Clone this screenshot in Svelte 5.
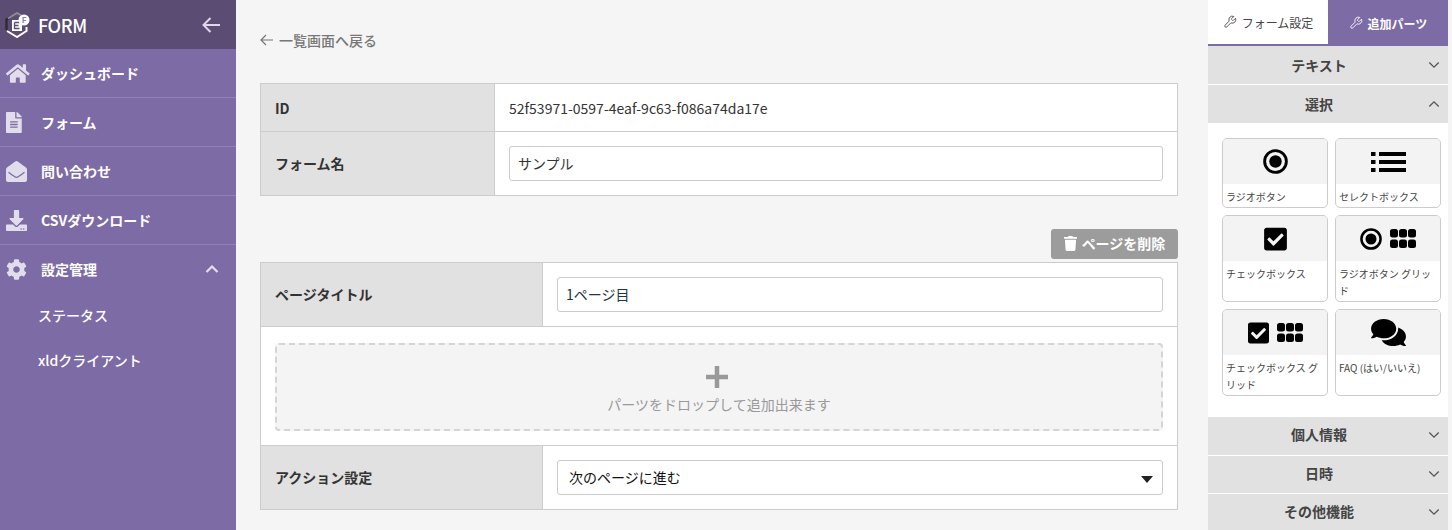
<script>
  const menu = [
    { label: 'ダッシュボード', icon: 'home' },
    { label: 'フォーム', icon: 'file' },
    { label: '問い合わせ', icon: 'mail' },
    { label: 'CSVダウンロード', icon: 'download' }
  ];

  // six rounded cells, 3 x 2
  const cell = (x, y) =>
    `M${x + 2.5} ${y}h3a2.5 2.5 0 0 1 2.5 2.5v3.500a2.500 2.500 0 0 1-2.500 2.500h-3a2.500 2.500 0 0 1-2.500-2.500v-3.500a2.500 2.500 0 0 1 2.500-2.500z`;
  const dotsPath = [0, 9, 18].map((x) => cell(x, 0) + cell(x, 10.5)).join('');

  const icons = {
    home: { box: '0 0 576 512', d: 'M280.37 148.26L96 300.11V464a16 16 0 0 0 16 16l112.06-.29a16 16 0 0 0 15.92-16V368a16 16 0 0 1 16-16h64a16 16 0 0 1 16 16v95.64a16 16 0 0 0 16 16.05L464 480a16 16 0 0 0 16-16V300L295.67 148.26a12.19 12.19 0 0 0-15.3 0zM571.6 251.47L488 182.56V44.05a12 12 0 0 0-12-12h-56a12 12 0 0 0-12 12v72.61L318.47 43a48 48 0 0 0-61 0L4.34 251.47a12 12 0 0 0-1.6 16.9l25.5 31A12 12 0 0 0 45.15 301l235.22-193.74a12.19 12.19 0 0 1 15.3 0L530.9 301a12 12 0 0 0 16.9-1.6l25.5-31a12 12 0 0 0-1.7-16.93z' },
    file: { box: '0 0 384 512', d: 'M224 136V0H24C10.7 0 0 10.7 0 24v464c0 13.3 10.7 24 24 24h336c13.3 0 24-10.7 24-24V160H248c-13.2 0-24-10.8-24-24zm64 236c0 6.6-5.4 12-12 12H108c-6.6 0-12-5.4-12-12v-8c0-6.6 5.4-12 12-12h168c6.6 0 12 5.4 12 12v8zm0-64c0 6.6-5.4 12-12 12H108c-6.6 0-12-5.4-12-12v-8c0-6.6 5.4-12 12-12h168c6.6 0 12 5.4 12 12v8zm0-72v8c0 6.6-5.4 12-12 12H108c-6.6 0-12-5.4-12-12v-8c0-6.6 5.4-12 12-12h168c6.6 0 12 5.4 12 12zm96-114.1v6.1H256V0h6.1c6.4 0 12.5 2.5 17 7l97.9 98c4.5 4.5 7 10.6 7 16.9z' },
    mail: { box: '0 0 512 512', d: 'M512 464c0 26.51-21.49 48-48 48H48c-26.51 0-48-21.49-48-48V200.724a48 48 0 0 1 18.387-37.776c24.913-19.529 45.501-35.365 164.2-121.511C199.412 29.17 232.797-.347 256 .003c23.198-.354 56.596 29.172 73.413 41.433 118.687 86.137 139.303 101.995 164.2 121.512A48 48 0 0 1 512 200.724V464zm-65.666-196.605c-2.563-3.728-7.7-4.595-11.339-1.907-22.845 16.873-55.462 40.705-105.582 77.079-16.825 12.266-50.21 41.781-73.413 41.43-23.211.344-56.559-29.143-73.413-41.43-50.114-36.37-82.734-60.204-105.582-77.079-3.639-2.688-8.776-1.821-11.339 1.907l-9.072 13.196a7.998 7.998 0 0 0 1.839 10.967c22.887 16.899 55.454 40.69 105.303 76.868 20.274 14.781 56.524 47.813 92.264 47.573 35.724.242 71.961-32.771 92.263-47.573 49.85-36.179 82.418-59.97 105.303-76.868a7.998 7.998 0 0 0 1.839-10.967l-9.071-13.196z' },
    download: { box: '0 0 512 512', d: 'M216 0h80c13.3 0 24 10.7 24 24v168h87.7c17.8 0 26.7 21.5 14.1 34.1L269.7 378.3c-7.5 7.5-19.8 7.5-27.3 0L90.1 226.1c-12.6-12.6-3.7-34.1 14.1-34.1H192V24c0-13.3 10.7-24 24-24zm296 376v112c0 13.3-10.7 24-24 24H24c-13.3 0-24-10.7-24-24V376c0-13.3 10.7-24 24-24h146.7l49 49c20.1 20.1 52.5 20.1 72.6 0l49-49H488c13.3 0 24 10.7 24 24zm-124 88c0-11-9-20-20-20s-20 9-20 20 9 20 20 20 20-9 20-20zm64 0c0-11-9-20-20-20s-20 9-20 20 9 20 20 20 20-9 20-20z' },
    cog: { box: '0 0 512 512', d: 'M487.4 315.7l-42.6-24.6c4.3-23.2 4.3-47 0-70.2l42.6-24.6c4.9-2.8 7.1-8.6 5.5-14-11.1-35.6-30-67.8-54.7-94.6-3.8-4.1-10-5.1-14.8-2.3L380.8 110c-17.9-15.4-38.5-27.3-60.8-35.1V25.8c0-5.6-3.9-10.5-9.4-11.7-36.7-8.2-74.3-7.8-109.2 0-5.5 1.2-9.4 6.1-9.4 11.7V75c-22.2 7.9-42.8 19.8-60.8 35.1L88.7 85.5c-4.9-2.8-11-1.9-14.8 2.3-24.7 26.7-43.6 58.9-54.7 94.6-1.7 5.4.6 11.2 5.5 14L67.3 221c-4.3 23.2-4.3 47 0 70.2l-42.6 24.6c-4.9 2.8-7.1 8.6-5.5 14 11.1 35.6 30 67.8 54.7 94.6 3.8 4.1 10 5.1 14.8 2.3l42.6-24.6c17.9 15.4 38.5 27.3 60.8 35.1v49.2c0 5.6 3.9 10.5 9.4 11.7 36.7 8.2 74.3 7.8 109.2 0 5.5-1.2 9.4-6.1 9.4-11.7v-49.2c22.2-7.9 42.8-19.8 60.8-35.1l42.6 24.6c4.9 2.8 11 1.9 14.8-2.3 24.7-26.7 43.6-58.9 54.7-94.6 1.5-5.5-.7-11.3-5.6-14.1zM256 336c-44.1 0-80-35.9-80-80s35.9-80 80-80 80 35.9 80 80-35.9 80-80 80z' },
    trash: { box: '0 0 448 512', d: 'M432 32H312l-9.4-18.7A24 24 0 0 0 281.1 0H166.8a23.72 23.72 0 0 0-21.4 13.3L136 32H16A16 16 0 0 0 0 48v32a16 16 0 0 0 16 16h416a16 16 0 0 0 16-16V48a16 16 0 0 0-16-16zM53.2 467a48 48 0 0 0 47.9 45h245.8a48 48 0 0 0 47.9-45L416 128H32z' },
    comments: { box: '0 0 576 512', d: 'M416 192c0-88.4-93.1-160-208-160S0 103.6 0 192c0 34.3 14.1 65.9 38 92-13.4 30.2-35.5 54.2-35.8 54.5-2.2 2.3-2.8 5.7-1.5 8.7S4.8 352 8 352c36.6 0 66.9-12.3 88.7-25 32.2 15.7 70.3 25 111.3 25 114.9 0 208-71.6 208-160zm122 220c23.9-26 38-57.7 38-92 0-66.9-53.5-124.2-129.3-148.1.9 6.6 1.3 13.3 1.3 20.1 0 105.9-107.7 192-240 192-10.8 0-21.3-.8-31.7-1.9C207.8 439.6 281.8 480 368 480c41 0 79.1-9.2 111.3-25 21.8 12.7 52.1 25 88.7 25 3.2 0 6.1-1.9 7.3-4.8 1.3-2.9.7-6.3-1.5-8.7-.3-.3-22.4-24.2-35.8-54.5z' },
    list: { box: '0 0 35 20', d: 'M0 0h4.500v4H0zM0 8h4.500v4H0zM0 16h4.500v4H0zM8 0h27v4H8zM8 8h27v4H8zM8 16h27v4H8z' },
    check: { box: '0 0 448 512', d: 'M400 480H48c-26.51 0-48-21.49-48-48V80c0-26.51 21.49-48 48-48h352c26.51 0 48 21.49 48 48v352c0 26.51-21.49 48-48 48zm-204.686-98.059l184-184c6.248-6.248 6.248-16.379 0-22.627l-22.627-22.627c-6.248-6.248-16.379-6.249-22.628 0L184 302.745l-70.059-70.059c-6.248-6.248-16.379-6.248-22.628 0l-22.627 22.627c-6.248 6.248-6.248 16.379 0 22.627l104 104c6.249 6.25 16.379 6.25 22.628.001z' },
    dots: { box: '0 0 26 19', d: dotsPath }
  };

  const wrench = 'M14.7 6.3a1 1 0 0 0 0 1.4l1.6 1.6a1 1 0 0 0 1.4 0l3.77-3.77a6 6 0 0 1-7.94 7.94l-6.91 6.91a2.12 2.12 0 0 1-3-3l6.91-6.91a6 6 0 0 1 7.94-7.94l-3.76 3.76z';

  const parts = [
    { label: 'ラジオボタン', icons: ['radio'] },
    { label: 'セレクトボックス', icons: ['list'] },
    { label: 'チェックボックス', icons: ['check'] },
    { label: 'ラジオボタン グリッド', icons: ['radio', 'dots'] },
    { label: 'チェックボックス グリッド', icons: ['check', 'dots'] },
    { label: 'FAQ (はい/いいえ)', icons: ['comments'] }
  ];
</script>

<div class="page">
  <aside class="side">
    <header class="brand">
      <svg class="logo" viewBox="0 0 26 26">
        <path d="M1.500 18V7.500L5 5.500" fill="none" stroke="#2f2a38" stroke-width="2.400" />
        <path d="M3 6.500 12 1l6 3.500" fill="none" stroke="#8f8a98" stroke-width="2" />
        <path d="M2 19l10 6 9.500-6v-4" fill="none" stroke="#fff" stroke-width="2" />
        <path d="M7 8h10v11H7z" fill="#fff" />
        <path d="M9.500 10.500h5M9.500 10.500v6h5M9.500 13.500h4" fill="none" stroke="#5a4c72" stroke-width="1.300" />
        <circle cx="19" cy="8" r="5.500" fill="#fff" />
        <text x="19" y="11" class="logo-f">F</text>
      </svg>
      <span class="brand-name">FORM</span>
      <svg class="back" viewBox="0 0 18 16"><path d="M8.500 1 1.500 8l7 7M1.500 8H18" fill="none" stroke="currentColor" stroke-width="2" /></svg>
    </header>
    <nav>
      {#each menu as m}
        <a class="item" href="#top">
          <span class="ico"><svg viewBox={icons[m.icon].box}><path d={icons[m.icon].d} /></svg></span>
          {m.label}
        </a>
      {/each}
      <a class="item open" href="#top">
        <span class="ico"><svg viewBox={icons.cog.box}><path d={icons.cog.d} /></svg></span>
        設定管理
        <svg class="chev-up" viewBox="0 0 14 8"><path d="M1.500 7 7 1.500 12.500 7" fill="none" stroke="currentColor" stroke-width="2.200" /></svg>
      </a>
      <a class="sub" href="#top">ステータス</a>
      <a class="sub" href="#top">xldクライアント</a>
    </nav>
  </aside>

  <main class="main">
    <a class="backlink" href="#top">
      <svg viewBox="0 0 14 12"><path d="M6 1 1 6l5 5M1 6h12" fill="none" stroke="currentColor" stroke-width="1.200" /></svg>
      一覧画面へ戻る
    </a>

    <section class="box form-box">
      <div class="row id-row">
        <div class="th">ID</div>
        <div class="td id-val">52f53971-0597-4eaf-9c63-f086a74da17e</div>
      </div>
      <div class="row">
        <div class="th">フォーム名</div>
        <div class="td"><input class="field" value="サンプル" /></div>
      </div>
    </section>

    <div class="actions">
      <button class="del">
        <svg viewBox={icons.trash.box}><path d={icons.trash.d} /></svg>
        ページを削除
      </button>
    </div>

    <section class="box page-box">
      <div class="row">
        <div class="th">ページタイトル</div>
        <div class="td"><input class="field title" value="1ページ目" /></div>
      </div>
      <div class="drop-wrap">
        <div class="drop">
          <svg class="plus" viewBox="0 0 22 22"><path d="M11 0v22M0 11h22" stroke="currentColor" stroke-width="4.500" /></svg>
          <span>パーツをドロップして追加出来ます</span>
        </div>
      </div>
      <div class="row last">
        <div class="th">アクション設定</div>
        <div class="td">
          <div class="select">次のページに進む</div>
        </div>
      </div>
    </section>
  </main>

  <aside class="panel">
    <div class="tabs">
      <button class="tab on">
        <svg viewBox="0 0 24 24"><path d={wrench} /></svg>
        フォーム設定
      </button>
      <button class="tab">
        <svg viewBox="0 0 24 24"><path d={wrench} /></svg>
        追加パーツ
      </button>
    </div>

    <div class="acc">テキスト<svg viewBox="0 0 14 8"><path d="M1.500 1 7 6.500 12.500 1" /></svg></div>
    <div class="acc">選択<svg viewBox="0 0 14 8"><path d="M1.500 7 7 1.500 12.500 7" /></svg></div>
    <div class="acc-body">
      {#each parts as p}
        <div class="part" class:grid={p.icons.length > 1}>
          <div class="part-ico">
            {#each p.icons as name}
              {#if name === 'radio'}
                <svg class="radio" viewBox="0 0 26 26"><circle cx="13" cy="13" r="11.300" fill="none" stroke="#000" stroke-width="3" /><circle cx="13" cy="13" r="6.500" /></svg>
              {:else}
                <svg class={name} viewBox={icons[name].box}><path d={icons[name].d} /></svg>
              {/if}
            {/each}
          </div>
          <div class="part-name">{p.label}</div>
        </div>
      {/each}
    </div>
    <div class="acc low">個人情報<svg viewBox="0 0 14 8"><path d="M1.500 1 7 6.500 12.500 1" /></svg></div>
    <div class="acc low">日時<svg viewBox="0 0 14 8"><path d="M1.500 1 7 6.500 12.500 1" /></svg></div>
    <div class="acc low">その他機能<svg viewBox="0 0 14 8"><path d="M1.500 1 7 6.500 12.500 1" /></svg></div>
  </aside>
</div>

<style>
  :global(body) {
    margin: 0;
    background: #f5f5f5;
    font-family: "Noto Sans CJK JP", "Noto Sans", sans-serif;
    color: #333;
  }

  a {
    color: inherit;
    text-decoration: none;
  }

  svg {
    display: block;
    fill: currentColor;
  }

  .page {
    display: flex;
    height: 530px;
    overflow: hidden;
  }

  /* sidebar */

  .side {
    width: 236px;
    flex: none;
    background: #7d6ba5;
    color: #fff;
  }

  .brand {
    height: 49px;
    background: #5a4c72;
    display: flex;
    align-items: center;
    padding: 0 16px 0 5px;
  }

  .logo {
    width: 26px;
    height: 26px;
  }

  .logo-f {
    font-size: 8px;
    font-weight: 700;
    fill: #8d7bb5;
    text-anchor: middle;
  }

  .brand-name {
    margin-left: 7px;
    font-size: 18px;
    font-weight: 500;
    letter-spacing: -0.4px;
  }

  .back {
    margin-left: auto;
    width: 18px;
    height: 16px;
    color: #ddd7e8;
  }

  .item {
    height: 48px;
    border-bottom: 1px solid #9180b5;
    display: flex;
    align-items: center;
    font-size: 14px;
    font-weight: 700;
    padding-left: 6px;
  }

  .item.open {
    border-bottom: 0;
    padding-right: 17px;
  }

  .ico {
    width: 35px;
    flex: none;
    color: #e2ddec;
  }

  .ico svg {
    height: 21px;
    max-width: 24px;
  }

  .chev-up {
    margin-left: auto;
    width: 14px;
    height: 8px;
    color: #e2ddec;
  }

  .sub {
    display: block;
    font-size: 14px;
    font-weight: 500;
    padding-left: 38px;
    height: 45px;
    line-height: 45px;
  }

  /* main column */

  .main {
    flex: 1;
    min-width: 0;
    padding: 0 30px 0 24px;
  }

  .backlink {
    display: flex;
    align-items: center;
    gap: 5px;
    height: 79px;
    padding-bottom: 4px;
    font-size: 14px;
    font-weight: 500;
    color: #777;
  }

  .backlink svg {
    width: 14px;
    height: 12px;
  }

  .box {
    background: #fff;
    border: 1px solid #ccc;
  }

  .row {
    display: flex;
    min-height: 63px;
    border-bottom: 1px solid #ccc;
  }

  .row:last-child {
    border-bottom: 0;
  }

  .id-row {
    min-height: 47px;
  }

  .th {
    width: 219px;
    flex: none;
    background: #e1e1e1;
    border-right: 1px solid #ccc;
    display: flex;
    align-items: center;
    padding: 0 0 2px 14px;
    font-size: 14px;
    font-weight: 700;
  }

  .id-row .th {
    padding-bottom: 0;
  }

  .page-box .th {
    width: 267px;
  }

  .td {
    flex: 1;
    display: flex;
    align-items: center;
    padding: 0 14px;
    font-size: 14px;
    min-width: 0;
  }

  .id-val {
    color: #333;
  }

  .field,
  .select {
    width: 100%;
    box-sizing: border-box;
    height: 35px;
    border: 1px solid #ccc;
    border-radius: 3px;
    background: #fff;
    padding: 0 8px 2px;
    font: inherit;
    font-size: 14px;
    color: #333;
    outline: none;
  }

  .field.title {
    color: #234;
  }

  .actions {
    display: flex;
    justify-content: flex-end;
    margin-top: 33px;
    margin-bottom: 3px;
  }

  .del {
    width: 127px;
    height: 30px;
    display: flex;
    align-items: center;
    justify-content: center;
    gap: 5px;
    border: 0;
    border-radius: 3px;
    background: #9c9c9c;
    color: #fff;
    font: inherit;
    font-size: 14px;
    font-weight: 700;
    padding: 0 0 2px;
  }

  .del svg {
    width: 13px;
    height: 15px;
  }

  .drop-wrap {
    padding: 16px 14px 14px;
    border-bottom: 1px solid #ccc;
  }

  .drop {
    height: 79px;
    padding-top: 5px;
    border: 2px dashed #d5d5d5;
    border-radius: 4px;
    background: #f4f4f4;
    display: flex;
    flex-direction: column;
    align-items: center;
    justify-content: center;
    gap: 6px;
    color: #999;
    font-size: 14px;
  }

  .plus {
    width: 22px;
    height: 22px;
    margin-right: 5px;
    color: #999;
  }

  .select {
    position: relative;
    display: flex;
    align-items: center;
    padding-left: 11px;
    color: #111;
  }

  .select::after {
    content: "";
    position: absolute;
    right: 9px;
    top: 15px;
    border: 6.500px solid transparent;
    border-top: 7px solid #222;
    border-bottom: 0;
  }

  /* right panel */

  .panel {
    width: 240px;
    flex: none;
    margin-right: 4px;
    background: #fff;
    color: #333;
  }

  .tabs {
    display: flex;
    height: 46px;
  }

  .tab {
    flex: 1;
    display: flex;
    align-items: center;
    justify-content: center;
    gap: 5px;
    border: 0;
    background: #7d6ba5;
    color: #fff;
    font: inherit;
    font-size: 12px;
    font-weight: 700;
    padding: 0;
  }

  .tab.on {
    background: #fff;
    color: #444;
    font-weight: 400;
    border-bottom: 2px solid #7d6ba5;
  }

  .tab svg {
    width: 14px;
    height: 14px;
    fill: none;
    stroke: currentColor;
    stroke-width: 1.500;
  }

  .acc {
    position: relative;
    height: 38px;
    margin-bottom: 1px;
    padding-right: 18px;
    background: #e1e1e1;
    display: flex;
    align-items: center;
    justify-content: center;
    font-size: 14px;
    font-weight: 700;
    color: #444;
  }

  .acc.low {
    box-sizing: border-box;
    height: 37.500px;
    padding-bottom: 3px;
  }

  .acc svg {
    position: absolute;
    right: 8px;
    top: 15px;
    width: 12px;
    height: 8px;
    fill: none;
    stroke: #555;
    stroke-width: 1.500;
  }

  .acc.low svg {
    top: 14px;
  }

  .acc-body {
    display: grid;
    grid-template-columns: 106px 106px;
    grid-auto-rows: min-content;
    gap: 7px;
    padding: 15px 7px 21px 14px;
    margin-top: -1px;
    background: #fff;
  }

  .part {
    border: 1px solid #ccc;
    border-radius: 5px;
    overflow: hidden;
    box-sizing: border-box;
  }

  .part-ico {
    height: 45px;
    background: #f3f3f3;
    display: flex;
    align-items: center;
    justify-content: center;
    gap: 8px;
    color: #000;
  }

  .part-ico .radio {
    width: 25px;
    height: 25px;
  }

  .part-ico .list {
    width: 35px;
    height: 20px;
  }

  .part-ico .check {
    width: 23px;
    height: 26px;
  }

  .part-ico .dots {
    width: 26px;
    height: 19px;
  }

  .part-ico .comments {
    width: 35px;
    height: 31px;
  }

  .part.grid .radio {
    width: 22px;
    height: 22px;
  }

  .part.grid .check {
    width: 21px;
    height: 24px;
  }

  .part-name {
    font-size: 10px;
    line-height: 17px;
    padding: 4px 2px 2px 3px;
    color: #444;
  }
</style>
